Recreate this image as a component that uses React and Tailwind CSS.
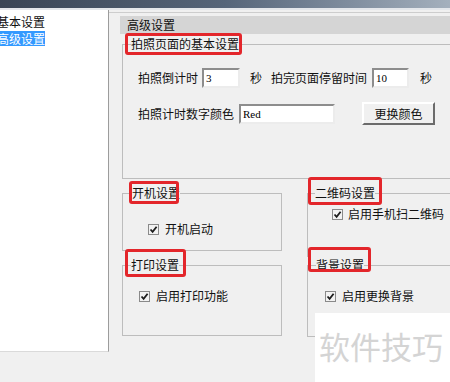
import React from 'react';

function Check() {
  return (
    <span className="w-[11px] h-[11px] border border-[#8a8a8a] bg-[#f2f2f2] flex items-center justify-center shrink-0">
      <svg width="9" height="9" viewBox="0 0 9 9">
        <path d="M1.5 4.5 L3.6 6.8 L7.6 1.8" fill="none" stroke="#1c1c1c" strokeWidth="1.8" />
      </svg>
    </span>
  );
}

function Legend({ text, ml, box }) {
  return (
    <legend className={`relative leading-[16px] whitespace-nowrap ${ml}`}>
      {text}
      <span className={`absolute border-[3px] border-[#e3262b] rounded-[3px] ${box}`}></span>
    </legend>
  );
}

function Field({ className, children }) {
  return (
    <div
      className={`h-[20px] bg-white border-2 border-t-[#8d8d8d] border-l-[#8d8d8d] border-b-[#ececec] border-r-[#ececec] font-['Liberation_Serif',serif] text-[11px] leading-[16px] pl-[2px] text-black ${className}`}
    >
      {children}
    </div>
  );
}

export default function App() {
  return (
    <div className="relative w-[450px] h-[382px] overflow-hidden bg-[#f0f0f0] text-[12px] text-[#111] font-['Noto_Sans_CJK_SC','Noto_Sans',sans-serif]">
      <div className="h-[8px] bg-gradient-to-r from-[#3a4555] via-[#55657a] to-[#a4b0bd]"></div>
      <div className="h-[2px] bg-[#e4e7eb]"></div>

      <div className="flex">
        {/* tree */}
        <div className="w-[109px] h-[342px] bg-white border-r border-b border-r-[#9c9c9c] border-b-[#dadada] pt-[4px] overflow-hidden">
          <div className="h-[16px] leading-[16px]">
            <span className="block -ml-[3px]">基本设置</span>
          </div>
          <div className="mt-[1px] w-[45px] h-[15px] leading-[15px] bg-[#3399ff] text-white overflow-hidden">
            <span className="block -ml-[3px] whitespace-nowrap">高级设置</span>
          </div>
        </div>

        {/* settings page */}
        <div className="w-[341px] overflow-hidden">
          <div className="h-px mt-[2px] bg-[#cdcdcd]"></div>
          <div className="ml-[11px] mt-[3px] h-[18px] leading-[18px] bg-[#d5d5d5] pl-[7px]">高级设置</div>

          <fieldset className="ml-[13px] mt-[2px] w-[345px] h-[143px] border border-[#bdbdbd]">
            <Legend text="拍照页面的基本设置" ml="ml-[8px]" box="-left-[6px] -top-[3px] w-[117px] h-[22px]" />
            <div className="pl-[15px]">
              <div className="flex items-center h-[20px] mt-[16px]">
                <span>拍照倒计时</span>
                <Field className="ml-[4px] w-[38px]">3</Field>
                <span className="ml-[10px]">秒</span>
                <span className="ml-[9px]">拍完页面停留时间</span>
                <Field className="ml-[5px] w-[37px]">10</Field>
                <span className="ml-[11px]">秒</span>
              </div>
              <div className="flex items-center h-[23px] mt-[14px]">
                <span>拍照计时数字颜色</span>
                <Field className="ml-[5px] w-[96px]">Red</Field>
                <button className="ml-[27px] w-[73px] h-[23px] bg-[#f0f0f0] border-2 border-t-white border-l-white border-b-[#6b6b6b] border-r-[#6b6b6b] text-[12px] leading-[17px]">更换颜色</button>
              </div>
            </div>
          </fieldset>

          <div className="ml-[13px] grid grid-cols-[160px_160px] gap-x-[25px]">
            <div className="flex flex-col">
              <fieldset className="mt-[6px] w-[160px] h-[66px] border border-[#bdbdbd]">
                <Legend text="开机设置" ml="ml-[9px]" box="-left-[3px] -top-[4px] w-[50px] h-[23px]" />
                <div className="flex items-center gap-[6px] h-[16px] mt-[20px] pl-[25px]">
                  <Check />
                  <span>开机启动</span>
                </div>
              </fieldset>
              <fieldset className="mt-[6px] w-[160px] h-[79px] border border-[#bdbdbd]">
                <Legend text="打印设置" ml="ml-[8px]" box="-left-[6px] -top-[8px] w-[61px] h-[28px]" />
                <div className="flex items-center gap-[6px] h-[16px] mt-[15px] pl-[16px]">
                  <Check />
                  <span>启用打印功能</span>
                </div>
              </fieldset>
            </div>

            <div className="flex flex-col">
              <fieldset className="mt-[6px] w-[160px] h-[72px] border border-b-0 border-[#bdbdbd]">
                <Legend text="二维码设置" ml="ml-[7px]" box="-left-[7px] -top-[8px] w-[74px] h-[28px]" />
                <div className="flex items-center gap-[5px] h-[16px] mt-[5px] pl-[24px]">
                  <Check />
                  <span>启用手机扫二维码</span>
                </div>
              </fieldset>
              <fieldset className="w-[160px] h-[80px] border border-[#bdbdbd]">
                <Legend text="背景设置" ml="ml-[8px]" box="-left-[8px] -top-[10px] w-[63px] h-[25px]" />
                <div className="flex items-center gap-[6px] h-[16px] mt-[15px] pl-[17px]">
                  <Check />
                  <span>启用更换背景</span>
                </div>
              </fieldset>
            </div>
          </div>
        </div>
      </div>

      {/* watermark */}
      <div className="absolute left-[315px] top-[313px] w-[135px] h-[69px] bg-white pl-[4px] pt-[17px]">
        <span className="block text-[31px] leading-[31px] text-[#d4d4d4] whitespace-nowrap">软件技巧</span>
      </div>
    </div>
  );
}
